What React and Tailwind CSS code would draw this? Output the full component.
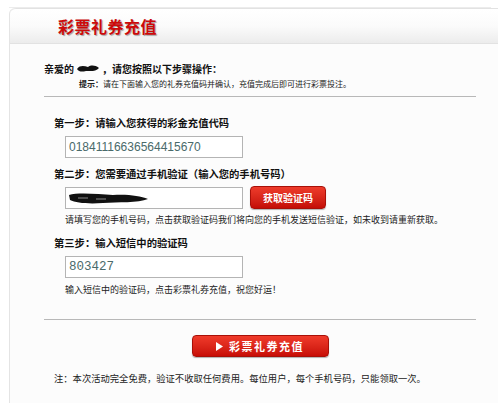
export default function App() {
  const f = { fontFamily: '"Noto Sans CJK SC", "Noto Sans", sans-serif' };
  return (
    <div className="w-[500px] h-[403px] bg-white overflow-hidden pt-[7px]" style={f}>
      <div className="h-px bg-[#ececec] mx-[9px]" />
      <div className="ml-[9px] mr-[2px] h-[395px] border-l border-[#e4e4e4] rounded-tl-[6px] bg-[#fcfcfc]">
        <div className="h-[36px] rounded-tl-[6px] border-t border-[#dcdcdc] bg-gradient-to-b from-white via-[#fbfbfb] to-[#ececec] border-b border-[#e2e2e2] flex items-center pl-[48px]">
          <span className="text-[16px] font-bold text-[#cc0a0a] tracking-[0.5px] [text-shadow:1px_1px_1px_rgba(0,0,0,0.35)]">彩票礼券充值</span>
        </div>
        <div className="pl-[34px] pr-[22px] pt-[16px] text-[#111]">
          <div className="flex items-center h-[16px] text-[10px] font-bold">
            <span>亲爱的</span>
            <svg width="24" height="10" className="mx-[2px]"><path d="M1 6 C4 2 8 3 12 4 C15 2 19 2 23 5 C20 9 14 8 10 8 C6 9 3 9 1 6Z" fill="#111" /></svg>
            <span>，请您按照以下步骤操作：</span>
          </div>
          <div className="h-[14px] mt-[1px] pl-[35px] text-[8px] flex items-center text-[#222]">
            <span className="font-bold">提示：</span>请在下面输入您的礼券充值码并确认，充值完成后即可进行彩票投注。
          </div>
          <div className="h-px bg-[#b8b8b8] mt-[5px]" />
          <div className="pl-[10px]">
            <div className="mt-[18px] h-[16px] text-[10.3px] font-bold flex items-center">第一步：请输入您获得的彩金充值代码</div>
            <div className="mt-[5px] ml-[11px] w-[178px] h-[22px] border border-[#b4b4b4] bg-white flex items-center pl-[3px] text-[12px] text-[#4a6a6a]" style={{ fontFamily: '"Liberation Sans", sans-serif' }}>01841116636564415670</div>
            <div className="mt-[8px] h-[16px] text-[10.3px] font-bold flex items-center">第二步：您需要通过手机验证（输入您的手机号码）</div>
            <div className="mt-[4px] ml-[11px] flex items-center gap-[7px]">
              <div className="w-[178px] h-[22px] border border-[#b4b4b4] bg-white flex items-center pl-[2px]">
                <svg width="82" height="14"><path d="M1 4 C10 1 30 3 45 4 C60 3 72 5 80 8 C70 12 50 11 35 12 C20 13 8 12 2 9 Z" fill="#111" /><path d="M10 7 L20 7 M28 8 L38 8" stroke="#888" strokeWidth="1" /></svg>
              </div>
              <div className="w-[76px] h-[23px] rounded-[4px] bg-gradient-to-b from-[#ee3b2b] to-[#c40c06] border border-[#a81008] text-white text-[10px] font-bold flex items-center justify-center shadow-[0_1px_1px_rgba(0,0,0,0.3)]">获取验证码</div>
            </div>
            <div className="mt-[3px] ml-[11px] h-[16px] text-[9px] flex items-center text-[#222]">请填写您的手机号码，点击获取验证码我们将向您的手机发送短信验证，如未收到请重新获取。</div>
            <div className="mt-[7px] h-[16px] text-[10.3px] font-bold flex items-center">第三步：输入短信中的验证码</div>
            <div className="mt-[5px] ml-[11px] w-[178px] h-[22px] border border-[#b4b4b4] bg-white flex items-center pl-[3px] text-[12.5px] text-[#4a6a6a]" style={{ fontFamily: '"Liberation Mono", monospace' }}>803427</div>
            <div className="mt-[4px] ml-[11px] h-[16px] text-[9px] flex items-center text-[#222]">输入短信中的验证码，点击彩票礼券充值，祝您好运！</div>
          </div>
          <div className="h-px bg-[#b8b8b8] mt-[21px]" />
          <div className="flex justify-center mt-[15px]">
            <div className="w-[137px] h-[22px] rounded-[4px] bg-gradient-to-b from-[#f03a2a] to-[#c80c06] border border-[#a81008] text-white text-[11px] font-bold flex items-center justify-center gap-[6px] tracking-[1.5px] shadow-[0_1px_1px_rgba(0,0,0,0.3)]">
              <svg width="7" height="9"><path d="M0 0 L7 4.5 L0 9 Z" fill="#fff" /></svg>
              彩票礼券充值
            </div>
          </div>
          <div className="mt-[14px] pl-[10px] h-[16px] text-[9.3px] flex items-center text-[#222]">注：本次活动完全免费，验证不收取任何费用。每位用户，每个手机号码，只能领取一次。</div>
        </div>
      </div>
    </div>
  );
}
